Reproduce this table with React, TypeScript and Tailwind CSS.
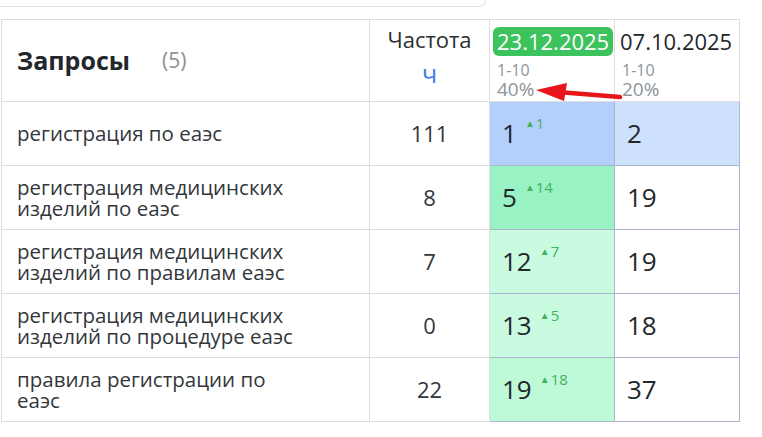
import React from "react";

type Row = {
  query: string[];
  freq: string;
  pos: string;
  delta: string;
  prev: string;
  bg: string;
  prevBg: string;
};

const rows: Row[] = [
  { query: ["регистрация по еаэс"], freq: "111", pos: "1", delta: "1", prev: "2", bg: "bg-[#b3cffb]", prevBg: "bg-[#cde0fc]" },
  { query: ["регистрация медицинских", "изделий по еаэс"], freq: "8", pos: "5", delta: "14", prev: "19", bg: "bg-[#99f2c4]", prevBg: "bg-white" },
  { query: ["регистрация медицинских", "изделий по правилам еаэс"], freq: "7", pos: "12", delta: "7", prev: "19", bg: "bg-[#c9fbe1]", prevBg: "bg-white" },
  { query: ["регистрация медицинских", "изделий по процедуре еаэс"], freq: "0", pos: "13", delta: "5", prev: "18", bg: "bg-[#c9fbe1]", prevBg: "bg-white" },
  { query: ["правила регистрации по", "еаэс"], freq: "22", pos: "19", delta: "18", prev: "37", bg: "bg-[#befad8]", prevBg: "bg-white" },
];

const App: React.FC = () => {
  return (
    <div className="relative w-[762px] h-[437px] overflow-hidden bg-white font-['Open_Sans',sans-serif] text-[#2b2f33]">
      {/* box above, cut off */}
      <div className="h-[7px] w-[486px] border-b border-r border-[#e3e3e3] rounded-br-[12px]" />

      {/* TABLE */}
      <div className="mt-[12px] ml-[1px] w-[739px] grid grid-cols-[368px_120px_125px_125px] border-t border-l border-[#dedede]">
        {/* HEADER */}
        <div className="h-[82px] border-r border-b border-[#dedede] flex items-center pl-[15px] pt-[1px]">
          <span className="text-[25px] font-bold text-[#23272b]">Запросы</span>
          <span className="ml-[32px] text-[21px] text-[#8e9296]">(5)</span>
        </div>
        <div className="h-[82px] border-r border-b border-[#dedede] flex flex-col items-center pt-[4px]">
          <span className="text-[22px] leading-[30px] text-[#2b2f33]">Частота</span>
          <span className="mt-[2px] text-[25px] leading-[34px] text-[#3b7fe0]">ч</span>
        </div>
        <div className="h-[82px] border-r border-b border-[#dedede] pl-[3px] pt-[7px]">
          <span className="inline-block rounded-[6px] bg-[#3cc35e] px-[4px] text-[22px] leading-[29px] text-white">
            23.12.2025
          </span>
          <div className="pl-[4px] mt-[6px] text-[16px] leading-[17px] text-[#8e949b]">1-10</div>
          <div className="pl-[4px] text-[19px] leading-[20px] text-[#8e949b]">40%</div>
        </div>
        <div className="h-[82px] border-r border-b border-[#dedede] pl-[5px] pt-[7px]">
          <span className="inline-block text-[22px] leading-[29px] text-[#23272b]">07.10.2025</span>
          <div className="pl-[2px] mt-[6px] text-[16px] leading-[17px] text-[#8e949b]">1-10</div>
          <div className="pl-[2px] text-[19px] leading-[20px] text-[#8e949b]">20%</div>
        </div>

        {/* BODY */}
        {rows.map((r, i) => (
          <React.Fragment key={i}>
            <div className="h-[64px] border-r border-b border-[#dedede] flex flex-col justify-center pl-[15px] text-[20.5px] leading-[21px] text-[#33373b]">
              {r.query.map((l, j) => (
                <span key={j}>{l}</span>
              ))}
            </div>
            <div className="h-[64px] border-r border-b border-[#dedede] flex items-center justify-center text-[22px] text-[#33373b]">
              {r.freq}
            </div>
            <div className={`h-[64px] border-r border-b border-[#a9b6cc] flex items-center pl-[12px] ${r.bg}`}>
              <span className="text-[26px] text-[#23272b]">{r.pos}</span>
              <span className="ml-[8px] -mt-[20px] flex items-center text-[15px] text-[#43b35a]">
                <span className="text-[10px] mr-[1px]">▲</span>
                {r.delta}
              </span>
            </div>
            <div className={`h-[64px] border-r border-b border-[#a9b6cc] flex items-center pl-[12px] ${r.prevBg}`}>
              <span className="text-[26px] text-[#23272b]">{r.prev}</span>
            </div>
          </React.Fragment>
        ))}
      </div>

      {/* ARROW */}
      <svg className="absolute left-0 top-0" width="762" height="437" viewBox="0 0 762 437">
        <line x1="558" y1="92" x2="620" y2="97" stroke="#e8151b" strokeWidth="4.5" strokeLinecap="round" />
        <polygon points="536,90 567,83 564,101" fill="#e8151b" />
      </svg>
    </div>
  );
};

export default App;
